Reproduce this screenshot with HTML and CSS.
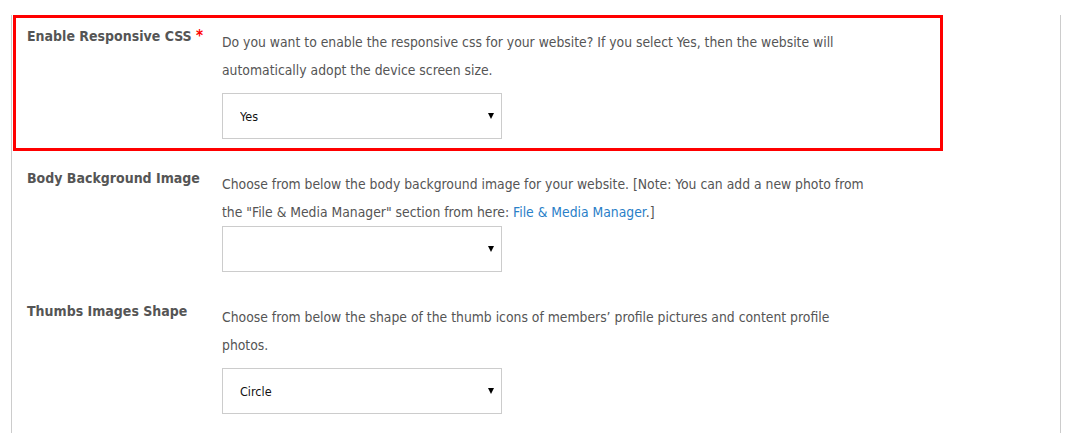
FILE: index.html
```html
<!doctype html>
<html lang="en">
<head>
	<meta charset="UTF-8">
	<title>Settings</title>
	<link rel="stylesheet" href="styles.css">
</head>
<body>
	<div class="settings">
		<div class="row highlight">
			<label class="label" for="responsive">Enable Responsive CSS <span class="req">*</span></label>
			<div class="field">
				<p class="desc">Do you want to enable the responsive css for your website? If you select Yes, then the website will automatically adopt the device screen size.</p>
				<div class="select-wrap">
					<select id="responsive">
						<option>Yes</option>
						<option>No</option>
					</select>
				</div>
			</div>
		</div>
		<div class="row">
			<label class="label" for="bgimage">Body Background Image</label>
			<div class="field">
				<p class="desc tight">Choose from below the body background image for your website. [Note: You can add a new photo from the "File &amp; Media Manager" section from here: <a href="#">File &amp; Media Manager</a>.]</p>
				<div class="select-wrap">
					<select id="bgimage">
						<option></option>
					</select>
				</div>
			</div>
		</div>
		<div class="row">
			<label class="label" for="thumbs">Thumbs Images Shape</label>
			<div class="field">
				<p class="desc">Choose from below the shape of the thumb icons of members’ profile pictures and content profile photos.</p>
				<div class="select-wrap">
					<select id="thumbs">
						<option>Circle</option>
						<option>Square</option>
					</select>
				</div>
			</div>
		</div>
	</div>
</body>
</html>
```
FILE: styles.css
```css
body{ margin: 0; background: #fff; font-family: Tahoma, "DejaVu Sans Condensed", "Liberation Sans", sans-serif;}
.settings{ margin-left: 11px; width: 1048px; min-height: 433px; border-left: 1px solid #ccc; border-right: 1px solid #ccc;}
.row{ display: flex; width: 930px; box-sizing: border-box; margin: 0 0 6px 1px; padding: 10px 0 9px 11px; border: 3px solid transparent;}
.row:first-child{ margin-top: 15px;}
.highlight{ border-color: #f00;}
.label{ width: 195px; flex: none; font-size: 14px; font-weight: bold; line-height: 16px; color: #555;}
.req{ color: #f00; font-size: 15px;}
.field{ width: 650px;}
.desc{ margin: 0 0 9px; font-size: 13.8px; line-height: 28px; color: #555;}
.desc.tight{ margin-bottom: 0;}
.desc a{ color: #2a80c8; text-decoration: none;}
.select-wrap{ position: relative; width: 280px;}
.select-wrap select{ appearance: none; -webkit-appearance: none; width: 280px; height: 46px; padding: 0 0 0 17px; border: 1px solid #ccc; border-radius: 0; background: #fff; font-family: inherit; font-size: 12.5px; color: #111; outline: none;}
.select-wrap::after{ content: ""; position: absolute; right: 8px; top: 20px; border-left: 3px solid transparent; border-right: 3px solid transparent; border-top: 6px solid #000; pointer-events: none;}
```
